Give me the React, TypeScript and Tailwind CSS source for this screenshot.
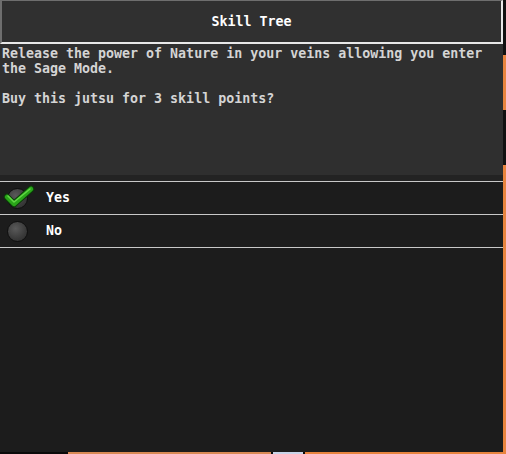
const MONO = "font-['DejaVu_Sans_Mono','Liberation_Mono',monospace]";

function CheckIcon() {
  return (
    <svg width="32" height="26" viewBox="0 0 32 26" className="absolute left-[3px] top-[2px]">
      <path d="M4 13 L11 20 L28 5" fill="none" stroke="#0b3d08" strokeWidth="6.5" strokeLinecap="round" strokeLinejoin="round" />
      <path d="M4 13 L11 20 L28 5" fill="none" stroke="#2aa51a" strokeWidth="4.5" strokeLinecap="round" strokeLinejoin="round" />
      <path d="M5 12 L11 18 L27 5" fill="none" stroke="#62d846" strokeWidth="1.5" strokeLinecap="round" strokeLinejoin="round" />
    </svg>
  );
}

function Radio({ checked }: { checked: boolean }) {
  return (
    <div className="relative w-[34px] h-[32px] shrink-0">
      <div className="absolute left-[7px] top-[6px] w-[21px] h-[21px] rounded-full border border-[#0f0f0f] bg-[radial-gradient(circle_at_40%_35%,#5a5a5a,#3a3a3a_60%,#2a2a2a)]" />
      {checked && <CheckIcon />}
    </div>
  );
}

function Option({ label, checked }: { label: string; checked: boolean }) {
  return (
    <div className="flex items-center h-[33px] border-b border-[#c8c8c8] bg-[#1c1c1c]">
      <Radio checked={checked} />
      <span className={`${MONO} ml-[12px] text-[13.3px] font-bold text-white`}>{label}</span>
    </div>
  );
}

export default function App() {
  return (
    <div className="flex flex-col w-[506px] h-[454px] bg-[#101010] overflow-hidden">
      <div className="flex h-[452px]">
        <div className="flex flex-col w-[503px] h-[452px] bg-[#1c1c1c]">
          <div className="h-[44px] shrink-0 flex items-center justify-center bg-[#303030] border-t border-l-2 border-t-[#6e6e6e] border-l-[#6e6e6e] border-b-2 border-r-2 border-b-[#e8e8e8] border-r-[#e8e8e8]">
            <span className={`${MONO} text-[13.3px] font-bold text-white`}>Skill Tree</span>
          </div>
          <div className={`${MONO} h-[131px] shrink-0 bg-[#2f2f2f] px-[2px] pt-[2px] text-[13.3px] font-bold leading-[15px] text-[#d4d4d4] whitespace-pre-wrap`}>
            {"Release the power of Nature in your veins allowing you enter\nthe Sage Mode.\n\nBuy this jutsu for 3 skill points?"}
          </div>
          <div className="h-[6px] shrink-0 bg-[#232323] border-b border-[#c8c8c8] box-content" />
          <Option label="Yes" checked />
          <Option label="No" checked={false} />
          <div className="flex-1 bg-[#1c1c1c]" />
        </div>
        <div className="flex flex-col w-[3px]">
          <div className="h-[55px] bg-[#111]" />
          <div className="h-[55px] bg-[#e8843e]" />
          <div className="h-[55px] bg-[#111]" />
          <div className="flex-1 bg-[#e8843e]" />
        </div>
      </div>
      <div className="flex h-[2px]">
        <div className="w-[68px] bg-[#0a0a0a]" />
        <div className="w-[203px] bg-[#d98a55]" />
        <div className="w-[2px] bg-[#0a0a0a]" />
        <div className="w-[30px] bg-[#c9d4e8]" />
        <div className="w-[2px] bg-[#0a0a0a]" />
        <div className="flex-1 bg-[#e8843e]" />
      </div>
    </div>
  );
}
